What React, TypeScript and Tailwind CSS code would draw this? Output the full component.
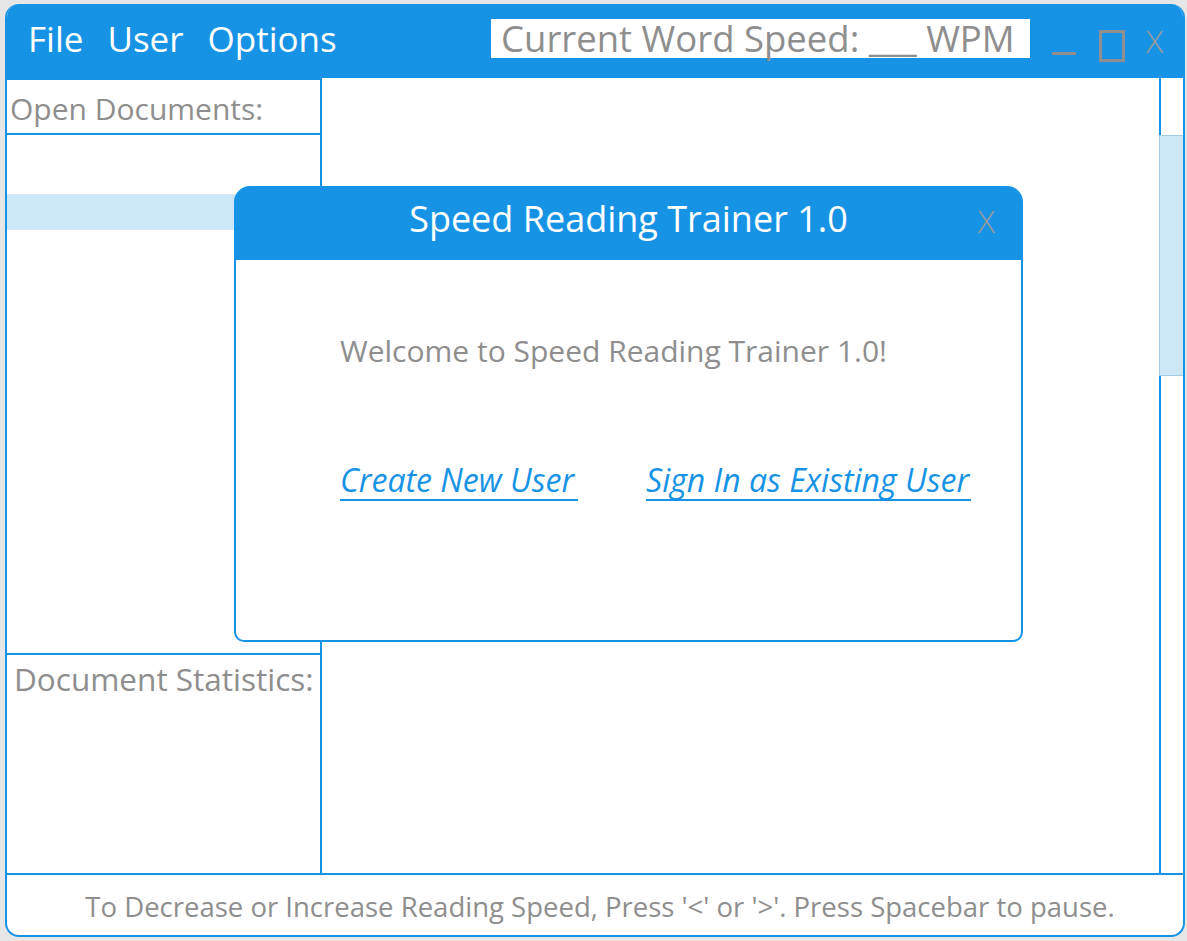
const font = { fontFamily: '"Open Sans", "Noto Sans", sans-serif' };

const TitleBar = () => (
  <div className="flex h-[74px] items-center bg-[#1793e6] pb-[5px] pl-[21px] pr-[14px] text-white">
    <div className="flex w-[463px] gap-[24px] whitespace-nowrap text-[35px] leading-none">
      <span>File</span>
      <span>User</span>
      <span>Options</span>
    </div>
    <div className="flex h-[39px] w-[539px] items-center whitespace-nowrap bg-white pl-[10px] text-[36.5px] leading-none text-[#8e8e8e]">
      Current Word Speed: ___ WPM
    </div>
    <div className="ml-[22px] mt-[30px] h-[3px] w-[24px] bg-[#8f8f8f]" />
    <div className="ml-[23px] mt-[14px] h-[32px] w-[26px] border-[3px] border-[#8f8f8f]" />
    <div className="ml-[21px] mt-[4px] text-[32px] font-light leading-none text-[#9a9a9a]">X</div>
  </div>
);

const LeftPanel = () => (
  <div className="flex w-[315px] flex-col border-r-2 border-[#1793e6]">
    <div className="flex h-[57px] items-center whitespace-nowrap border-y-2 border-[#1793e6] pl-[3px] pt-[4px] text-[30px] leading-none text-[#8e8e8e]">
      Open Documents:
    </div>
    <div className="h-[59px]" />
    <div className="h-[36px] bg-[#cce7f8]" />
    <div className="flex-1" />
    <div className="h-[220px] whitespace-nowrap border-t-2 border-[#1793e6] pl-[7px] pt-[8px] text-[31.5px] leading-none text-[#8e8e8e]">
      Document Statistics:
    </div>
  </div>
);

const ScrollBar = () => (
  <div className="w-[24px] border-l-2 border-[#1793e6]">
    <div className="-ml-[2px] mt-[57px] h-[241px] w-[26px] border border-[#a6cbe4] bg-[#cce7f8]" />
  </div>
);

const WelcomeDialog = () => (
  <div className="absolute left-[227px] top-[182px] flex h-[456px] w-[789px] flex-col">
    <div className="relative flex h-[74px] items-center justify-center whitespace-nowrap rounded-t-[16px] bg-[#1793e6] pb-[8px] text-[36px] text-white">
      Speed Reading Trainer 1.0
      <span className="absolute right-[28px] top-[11px] text-[32px] font-light text-[#9a9a9a]">X</span>
    </div>
    <div className="flex flex-1 flex-col rounded-b-[10px] border-2 border-t-0 border-[#1793e6] bg-white pl-[104px]">
      <div className="mt-[68px] whitespace-nowrap text-[30px] text-[#8e8e8e]">Welcome to Speed Reading Trainer 1.0!</div>
      <div className="mt-[91px] flex gap-[68px] whitespace-nowrap text-[32px] italic leading-none text-[#1793e6]">
        <span className="border-b-2 border-[#1793e6] pb-[3px] pr-[4px]">Create New User</span>
        <span className="border-b-2 border-[#1793e6] pb-[3px] pr-[2px]">Sign In as Existing User</span>
      </div>
    </div>
  </div>
);

export default function App() {
  return (
    <div className="h-[941px] w-[1187px] bg-[#e6e6e6] pl-[5px] pr-[2px] pt-[4px] pb-[4px]" style={font}>
      <div className="relative flex h-full flex-col overflow-hidden rounded-[14px] border-2 border-t-0 border-[#1793e6] bg-white">
        <TitleBar />
        <div className="flex flex-1">
          <LeftPanel />
          <div className="flex-1" />
          <ScrollBar />
        </div>
        <div className="flex h-[62px] items-center justify-center whitespace-nowrap border-t-2 border-[#1793e6] pl-[10px] pt-[4px] text-[27.5px] leading-none text-[#8e8e8e]">
          To Decrease or Increase Reading Speed, Press '&lt;' or '&gt;'. Press Spacebar to pause.
        </div>
        <WelcomeDialog />
      </div>
    </div>
  );
}
